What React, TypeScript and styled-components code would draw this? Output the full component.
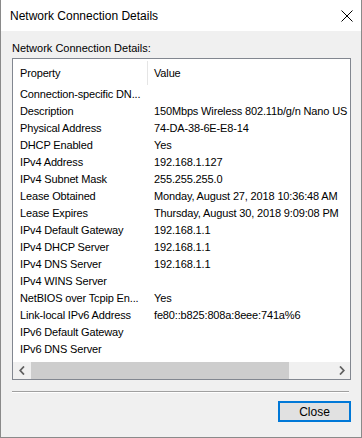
import styled, { createGlobalStyle } from "styled-components";

const GlobalStyle = createGlobalStyle`
	html, body {
		margin: 0;
		padding: 0;
		background: #ffffff;
	}
	* {
		box-sizing: border-box;
	}
`;

const Window = styled.div`
	width: 362px;
	height: 438px;
	border: 1px solid #8a8a8a;
	border-top: none;
	display: flex;
	flex-direction: column;
	font-family: "Liberation Sans", Arial, sans-serif;
	font-size: 11px;
	color: #000;
`;

const TitleBar = styled.div`
	height: 31px;
	background: #ffffff;
	display: flex;
	align-items: center;
	justify-content: space-between;
	padding: 0 8px 0 9px;
	font-size: 12px;
`;

const Body = styled.div`
	flex: 1;
	background: #f0f0f0;
	padding: 10px 0 0 11px;
	display: flex;
	flex-direction: column;
`;

const Caption = styled.div`
	line-height: 15px;
	height: 15px;
	margin-bottom: 2px;
`;

const ListBox = styled.div`
	width: 339px;
	height: 322px;
	border: 1px solid #828790;
	background: #ffffff;
	display: flex;
	flex-direction: column;
	overflow: hidden;
	letter-spacing: -0.15px;
`;

const Header = styled.div`
	height: 26px;
	display: flex;
	flex-shrink: 0;
`;

const HeaderCell = styled.div<{ $w?: number; $divider?: boolean }>`
	width: ${(p) => (p.$w ? `${p.$w}px` : "auto")};
	flex: ${(p) => (p.$w ? "none" : 1)};
	padding-left: ${(p) => (p.$divider ? 7 : 6)}px;
	display: flex;
	align-items: center;
	border-right: ${(p) => (p.$divider ? "1px solid #e5e5e5" : "none")};
	margin: 2px 0 0;
`;

const Rows = styled.div`
	flex: 1;
	display: flex;
	flex-direction: column;
`;

const Row = styled.div`
	height: 17px;
	display: flex;
	align-items: center;
	white-space: nowrap;
`;

const Cell = styled.div<{ $w?: number }>`
	width: ${(p) => (p.$w ? `${p.$w}px` : "auto")};
	flex: ${(p) => (p.$w ? "none" : 1)};
	padding-left: ${(p) => (p.$w ? 7 : 6)}px;
	overflow: hidden;
	white-space: nowrap;
`;

const ScrollBar = styled.div`
	height: 17px;
	flex-shrink: 0;
	background: #f0f0f0;
	display: flex;
	align-items: stretch;
`;

const Arrow = styled.div`
	width: 17px;
	display: flex;
	align-items: center;
	justify-content: center;
	color: #606060;
`;

const Track = styled.div`
	flex: 1;
	display: flex;
	align-items: stretch;
	padding: 0 0 0 1px;
`;

const Thumb = styled.div`
	width: 258px;
	background: #cdcdcd;
`;

const Separator = styled.div`
	width: 337px;
	height: 2px;
	margin-top: 11px;
	border-top: 1px solid #a0a0a0;
	border-bottom: 1px solid #ffffff;
`;

const Footer = styled.div`
	width: 339px;
	display: flex;
	justify-content: flex-end;
	margin-top: 8px;
`;

const Button = styled.button`
	width: 73px;
	height: 21px;
	border: 2px solid #0078d7;
	background: #e1e1e1;
	font-family: inherit;
	font-size: 12px;
	color: #000;
	padding: 0;
	margin-right: 0;
`;

const rows: [string, string][] = [
	["Connection-specific DN...", ""],
	["Description", "150Mbps Wireless 802.11b/g/n Nano US"],
	["Physical Address", "74-DA-38-6E-E8-14"],
	["DHCP Enabled", "Yes"],
	["IPv4 Address", "192.168.1.127"],
	["IPv4 Subnet Mask", "255.255.255.0"],
	["Lease Obtained", "Monday, August 27, 2018 10:36:48 AM"],
	["Lease Expires", "Thursday, August 30, 2018 9:09:08 PM"],
	["IPv4 Default Gateway", "192.168.1.1"],
	["IPv4 DHCP Server", "192.168.1.1"],
	["IPv4 DNS Server", "192.168.1.1"],
	["IPv4 WINS Server", ""],
	["NetBIOS over Tcpip En...", "Yes"],
	["Link-local IPv6 Address", "fe80::b825:808a:8eee:741a%6"],
	["IPv6 Default Gateway", ""],
	["IPv6 DNS Server", ""],
];

function Chevron({ left }: { left?: boolean }) {
	return (
		<svg width="6" height="9" viewBox="0 0 6 9">
			<path
				d={left ? "M5 0.5 L1.2 4.5 L5 8.5" : "M1 0.5 L4.8 4.5 L1 8.5"}
				fill="none"
				stroke="currentColor"
				strokeWidth="1.8"
			/>
		</svg>
	);
}

export default function App() {
	return (
		<>
			<GlobalStyle />
			<Window>
				<TitleBar>
					<span>Network Connection Details</span>
					<svg width="12" height="12" viewBox="0 0 12 12">
						<path d="M0.5 0.5 L11.5 11.5 M11.5 0.5 L0.5 11.5" stroke="#000" strokeWidth="1" />
					</svg>
				</TitleBar>
				<Body>
					<Caption>Network Connection Details:</Caption>
					<ListBox>
						<Header>
							<HeaderCell $w={135} $divider>
								Property
							</HeaderCell>
							<HeaderCell>Value</HeaderCell>
						</Header>
						<Rows>
							{rows.map(([k, v]) => (
								<Row key={k}>
									<Cell $w={135}>{k}</Cell>
									<Cell>{v}</Cell>
								</Row>
							))}
						</Rows>
						<ScrollBar>
							<Arrow>
								<Chevron left />
							</Arrow>
							<Track>
								<Thumb />
							</Track>
							<Arrow>
								<Chevron />
							</Arrow>
						</ScrollBar>
					</ListBox>
					<Separator />
					<Footer>
						<Button>Close</Button>
					</Footer>
				</Body>
			</Window>
		</>
	);
}
